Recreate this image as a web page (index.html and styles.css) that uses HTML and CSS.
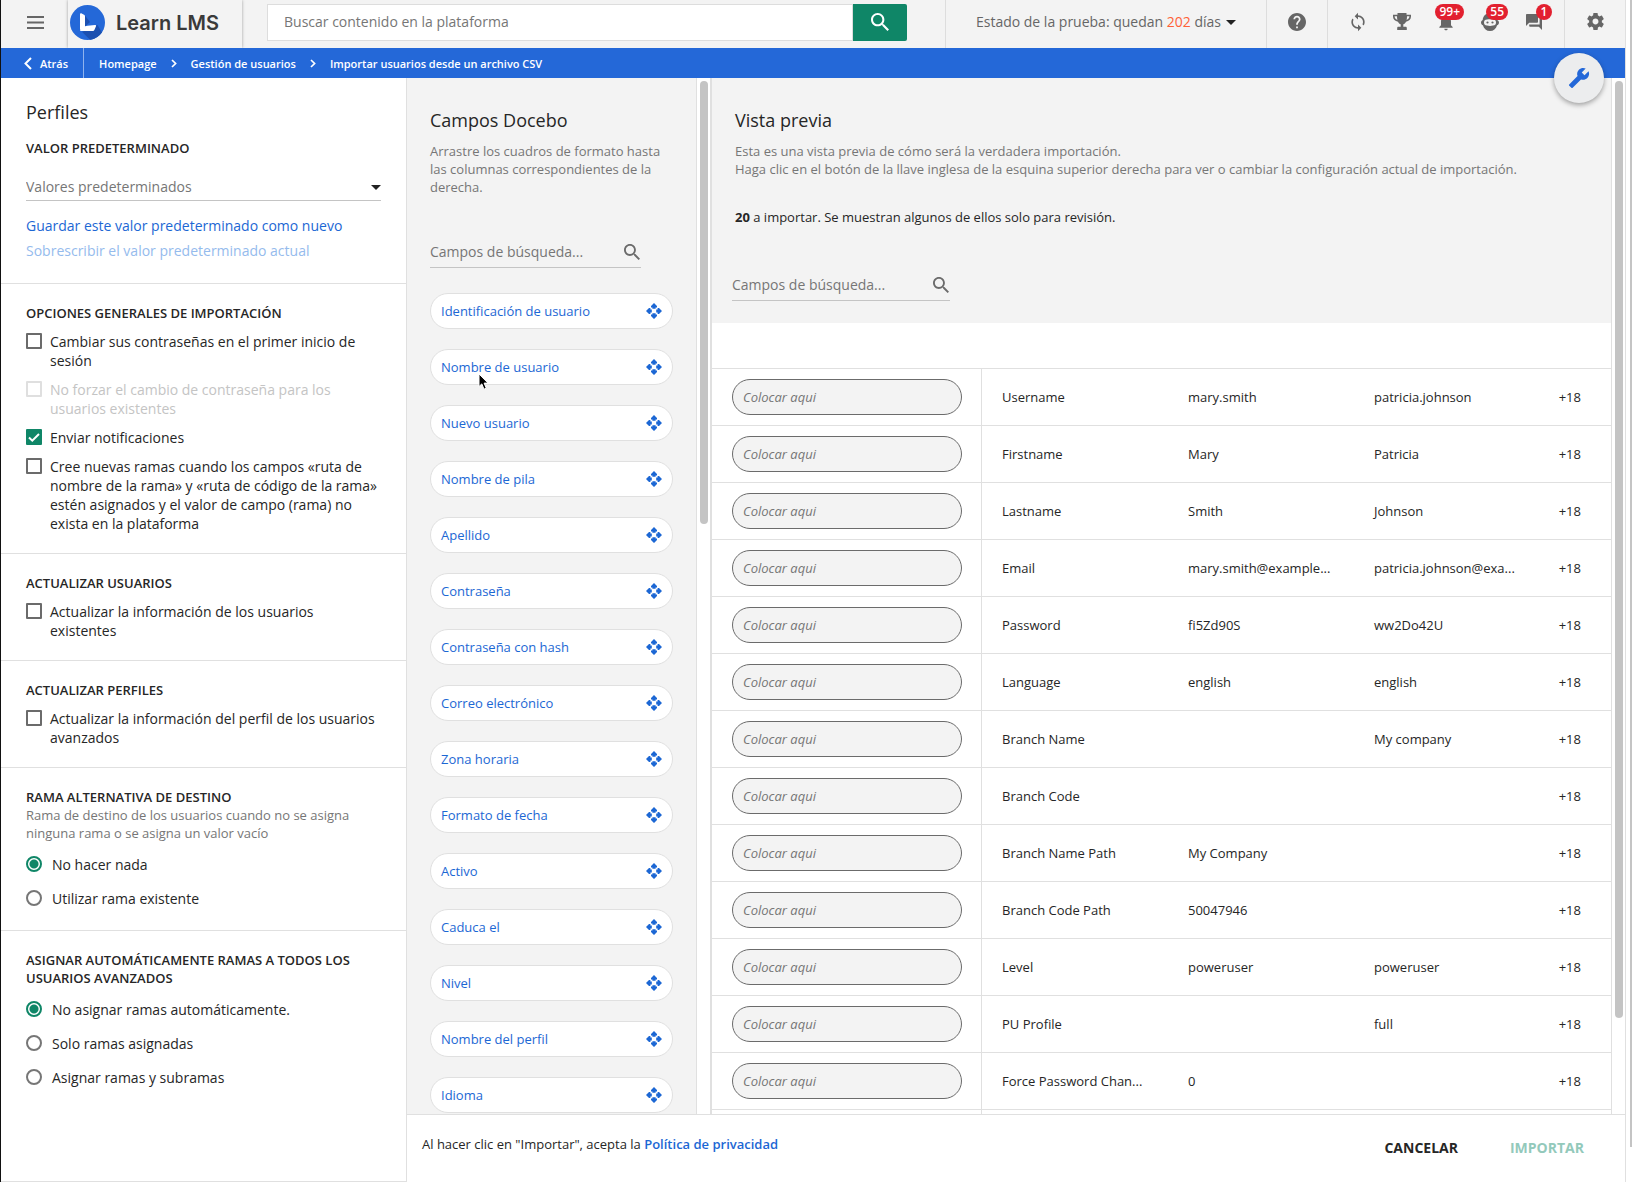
FILE: index.html
```html
<!DOCTYPE html>
<html lang="es">
<head>
  <meta charset="UTF-8">
  <meta name="viewport" content="width=device-width, initial-scale=1">
  <title>Importar usuarios desde un archivo CSV</title>
  <link rel="stylesheet" href="styles.css">
</head>
<body>

  <!-- Iconos compartidos -->
  <svg class="sprite" aria-hidden="true">
    <symbol id="i-search" viewBox="3 3 17.5 17.5"><path d="M15.5 14h-.79l-.28-.27C15.41 12.59 16 11.11 16 9.5 16 5.91 13.09 3 9.5 3S3 5.91 3 9.5 5.91 16 9.5 16c1.61 0 3.09-.59 4.23-1.57l.27.28v.79l5 4.99L20.49 19l-4.99-5zm-6 0C7.01 14 5 11.99 5 9.5S7.01 5 9.5 5 14 7.01 14 9.5 11.99 14 9.5 14z"/></symbol>
    <symbol id="i-move" viewBox="0 0 16 16"><path d="M8 0l3 3v1.400H9.600v1.400H6.400V4.400H5V3zM8 16l3-3v-1.400H9.600v-1.400H6.400v1.400H5V13zM0 8l3-3h1.400v1.400h1.400v3.200H4.400V11H3zM16 8l-3-3h-1.400v1.400h-1.400v3.200h1.400V11H13z"/></symbol>
    <symbol id="i-chevron" viewBox="0 0 6 9"><path d="M1 1l3.6 3.5L1 8" fill="none" stroke="currentColor" stroke-width="1.7"/></symbol>
  </svg>

  <div class="app">
    <header class="topbar">
      <button class="menu-btn" aria-label="Menú"><svg width="17" height="13" viewBox="0 0 17 13"><path d="M0 0h17v2H0zM0 5.5h17v2H0zM0 11h17v2H0z"/></svg></button>
      <a class="brand" href="#">
        <svg width="35" height="35" viewBox="0 0 35 35">
          <circle cx="17.500" cy="17.500" r="17.500" fill="#2468d8"/>
          <path d="M16 25.500L27.500 20l4.500 7.500A17.500 17.500 0 0 1 20 34.800l-8-8z" fill="#1c50b0"/>
          <path d="M14.500 10l5.500 7-5.500 5z" fill="#1c50b0"/>
          <path d="M10 9.500c0-1 .8-1.400 1.700-1l2.300 1.200c.8.400 1 1 1 1.800V23l-5 2z" fill="#fff"/>
          <path d="M10 25.800c1.500-3 4-4.600 7.500-5l7.500-.8c1 0 1.300.700.900 1.500l-1.400 3.300c-.4.900-1 1.200-2 1.200H11c-.7 0-1 0-1-.2z" fill="#fff"/>
        </svg>
        <span>Learn LMS</span>
      </a>
      <form class="search">
        <input type="search" placeholder="Buscar contenido en la plataforma" aria-label="Buscar contenido en la plataforma">
        <button type="button" aria-label="Buscar"><svg width="18" height="18"><use href="#i-search"/></svg></button>
      </form>
      <button class="trial">Estado de la prueba: quedan <em>202</em> días<i class="caret"></i></button>
      <div class="tools">
        <button aria-label="Ayuda"><svg width="18" height="18" viewBox="2 2 20 20"><path d="M12 2C6.480 2 2 6.480 2 12s4.480 10 10 10 10-4.480 10-10S17.520 2 12 2zm1 17h-2v-2h2v2zm2.070-7.750l-.9.920C13.450 12.900 13 13.500 13 15h-2v-.5c0-1.100.45-2.100 1.170-2.830l1.240-1.260c.37-.36.59-.86.59-1.410 0-1.100-.9-2-2-2s-2 .9-2 2H8c0-2.210 1.790-4 4-4s4 1.790 4 4c0 .88-.36 1.680-.93 2.250z"/></svg></button>
      </div>
      <div class="tools">
        <button aria-label="Sincronizar"><svg width="20" height="20" viewBox="0 0 24 24"><path d="M12 4V1L8 5l4 4V6c3.310 0 6 2.690 6 6 0 1.010-.25 1.970-.7 2.800l1.460 1.460C19.540 15.030 20 13.570 20 12c0-4.420-3.580-8-8-8zm0 14c-3.310 0-6-2.690-6-6 0-1.010.25-1.970.7-2.800L5.240 7.740C4.460 8.970 4 10.430 4 12c0 4.420 3.580 8 8 8v3l4-4-4-4v3z"/></svg></button>
        <button aria-label="Logros"><svg width="18" height="17" viewBox="0 0 18 17"><path d="M4.500 0h9v1.800H18v1.700c0 2.700-2.200 4.700-5 5.200-.7 1.400-1.600 2.200-2.700 2.500v2.600h2.200c.8 0 1.300.5 1.300 1.300V17H4.200v-1.900c0-.8.5-1.300 1.300-1.300h2.200v-2.600C6.600 10.900 5.700 10.100 5 8.700 2.200 8.200 0 6.200 0 3.500V1.800h4.500zM1.600 3.300c0 1.700 1.100 3 2.800 3.600-.3-1.100-.4-2.300-.4-3.600zm14.800 0H14c0 1.300-.1 2.500-.4 3.600 1.700-.6 2.800-1.900 2.800-3.600z"/></svg></button>
        <button aria-label="Notificaciones"><svg width="20" height="20" viewBox="0 0 24 24"><path d="M12 22c1.100 0 2-.9 2-2h-4c0 1.100.89 2 2 2zm6-6v-5c0-3.070-1.640-5.640-4.500-6.320V4c0-.83-.67-1.500-1.500-1.500s-1.500.67-1.500 1.500v.68C7.630 5.360 6 7.920 6 11v5l-2 2v1h16v-1l-2-2z"/></svg><span class="badge">99+</span></button>
        <button aria-label="Coach"><svg width="18" height="18" viewBox="0 0 18 18"><path d="M9 0c4 0 7 3 7.300 6.900.900.400 1.700 1.200 1.700 2.600 0 1.600-.8 2.400-1.900 2.700C15 15.800 12.500 18 9 18s-6-2.200-7.100-5.800C.8 11.900 0 11.100 0 9.500 0 8.100.8 7.300 1.700 6.900 2 3 5 0 9 0zM6 6.500a3 3 0 0 0 0 6c2 .5 4 .5 6 0a3 3 0 0 0 0-6c-2-.4-4-.4-6 0z" fill-rule="evenodd"/><circle cx="6.500" cy="9.500" r="1.100"/><circle cx="11.500" cy="9.500" r="1.100"/></svg><span class="badge">55</span></button>
        <button aria-label="Mensajes"><svg width="16" height="16" viewBox="2 2 20 20"><path d="M21 6h-2v9H6v2c0 .55.45 1 1 1h11l4 4V7c0-.55-.45-1-1-1zm-4 6V3c0-.55-.45-1-1-1H3c-.55 0-1 .45-1 1v14l4-4h10c.55 0 1-.45 1-1z"/></svg><span class="badge">1</span></button>
      </div>
      <div class="tools">
        <button aria-label="Configuración"><svg width="17" height="17" viewBox="2 2 20 20"><path d="M19.430 12.980c.04-.32.07-.64.07-.98s-.03-.66-.07-.98l2.110-1.650c.19-.15.24-.42.12-.64l-2-3.460c-.12-.22-.39-.3-.61-.22l-2.490 1c-.52-.4-1.080-.73-1.690-.98l-.38-2.650C14.460 2.180 14.250 2 14 2h-4c-.25 0-.46.18-.49.42l-.38 2.650c-.61.25-1.170.59-1.690.98l-2.490-1c-.23-.09-.49 0-.61.22l-2 3.460c-.13.22-.07.49.12.64l2.110 1.650c-.04.32-.07.65-.07.98s.03.66.07.98l-2.110 1.650c-.19.15-.24.42-.12.64l2 3.460c.12.22.39.3.61.22l2.490-1c.52.4 1.080.73 1.690.98l.38 2.650c.03.24.24.42.49.42h4c.25 0 .46-.18.49-.42l.38-2.650c.61-.25 1.170-.59 1.690-.98l2.490 1c.23.09.49 0 .61-.22l2-3.460c.12-.22.07-.49-.12-.64l-2.110-1.650zM12 15.500c-1.930 0-3.500-1.570-3.500-3.500s1.570-3.500 3.500-3.500 3.500 1.570 3.500 3.500-1.570 3.500-3.500 3.500z"/></svg></button>
      </div>
    </header>

    <nav class="crumbs" aria-label="Ruta">
      <a class="back" href="#"><svg width="8" height="13" viewBox="0 0 8 13"><path d="M7 1L1.500 6.500 7 12" fill="none" stroke="currentColor" stroke-width="2"/></svg>Atrás</a>
      <a href="#">Homepage</a>
      <svg width="6" height="9"><use href="#i-chevron"/></svg>
      <a href="#">Gestión de usuarios</a>
      <svg width="6" height="9"><use href="#i-chevron"/></svg>
      <span>Importar usuarios desde un archivo CSV</span>
      <button class="fab" aria-label="Configuración de importación"><svg width="22" height="22" viewBox="0 0 24 24"><path transform="matrix(-1 0 0 1 24 0)" d="M22.700 19l-9.100-9.100c.9-2.300.4-5-1.500-6.900-2-2-5-2.400-7.400-1.300L9 6 6 9 1.600 4.700C.4 7.100.9 10.100 2.900 12.100c1.900 1.900 4.600 2.400 6.900 1.500l9.100 9.100c.4.4 1 .4 1.400 0l2.300-2.300c.5-.4.5-1.100.1-1.400z"/></svg></button>
    </nav>

    <main class="main">
      <aside class="sidebar">
        <section>
          <h1>Perfiles</h1>
          <h2><label for="preset">Valor predeterminado</label></h2>
          <div class="select">
            <select id="preset"><option>Valores predeterminados</option></select>
            <i class="caret"></i>
          </div>
          <a class="link" href="#">Guardar este valor predeterminado como nuevo</a>
          <a class="link disabled" href="#" aria-disabled="true">Sobrescribir el valor predeterminado actual</a>
        </section>

        <section>
          <h2>Opciones generales de importación</h2>
          <label class="check"><input type="checkbox">Cambiar sus contraseñas en el primer inicio de sesión</label>
          <label class="check disabled"><input type="checkbox" disabled>No forzar el cambio de contraseña para los usuarios existentes</label>
          <label class="check"><input type="checkbox" checked>Enviar notificaciones</label>
          <label class="check"><input type="checkbox">Cree nuevas ramas cuando los campos «ruta de nombre de la rama» y «ruta de código de la rama» estén asignados y el valor de campo (rama) no exista en la plataforma</label>
        </section>

        <section>
          <h2>Actualizar usuarios</h2>
          <label class="check"><input type="checkbox">Actualizar la información de los usuarios existentes</label>
        </section>

        <section>
          <h2>Actualizar perfiles</h2>
          <label class="check"><input type="checkbox">Actualizar la información del perfil de los usuarios avanzados</label>
        </section>

        <section>
          <h2>Rama alternativa de destino</h2>
          <p class="hint">Rama de destino de los usuarios cuando no se asigna ninguna rama o se asigna un valor vacío</p>
          <div class="radios">
            <label><input type="radio" name="fallback" checked>No hacer nada</label>
            <label><input type="radio" name="fallback">Utilizar rama existente</label>
          </div>
        </section>

        <section>
          <h2>Asignar automáticamente ramas a todos los usuarios avanzados</h2>
          <div class="radios">
            <label><input type="radio" name="assign" checked>No asignar ramas automáticamente.</label>
            <label><input type="radio" name="assign">Solo ramas asignadas</label>
            <label><input type="radio" name="assign">Asignar ramas y subramas</label>
          </div>
        </section>
      </aside>

      <div class="content">
        <div class="columns">
          <section class="fields">
            <h1>Campos Docebo</h1>
            <p class="hint">Arrastre los cuadros de formato hasta las columnas correspondientes de la derecha.</p>
            <div class="filter">
              <input type="text" placeholder="Campos de búsqueda..." aria-label="Campos de búsqueda">
              <svg width="16" height="16"><use href="#i-search"/></svg>
            </div>
            <ul class="chips" id="chips"></ul>
          </section>
          <div class="scrollbar"><div class="thumb thumb-fields"></div></div>

          <section class="preview">
            <div class="preview-head">
              <h1>Vista previa</h1>
              <p class="hint">Esta es una vista previa de cómo será la verdadera importación.<br>Haga clic en el botón de la llave inglesa de la esquina superior derecha para ver o cambiar la configuración actual de importación.</p>
              <p class="count"><b>20</b> a importar. Se muestran algunos de ellos solo para revisión.</p>
              <div class="filter">
                <input type="text" placeholder="Campos de búsqueda..." aria-label="Campos de búsqueda">
                <svg width="16" height="16"><use href="#i-search"/></svg>
              </div>
            </div>
            <table>
              <colgroup><col class="col-drop"><col><col><col><col class="col-more"></colgroup>
              <tbody id="rows"></tbody>
            </table>
          </section>
          <div class="scrollbar scrollbar-end"><div class="thumb thumb-preview"></div></div>
        </div>

        <footer class="footer">
          <p>Al hacer clic en "Importar", acepta la <a href="#">Política de privacidad</a></p>
          <button>Cancelar</button>
          <button disabled>Importar</button>
        </footer>
      </div>
    </main>
  </div>
  <div class="page-scroll"></div>

  <script>
    const fields = [
      'Identificación de usuario', 'Nombre de usuario', 'Nuevo usuario', 'Nombre de pila',
      'Apellido', 'Contraseña', 'Contraseña con hash', 'Correo electrónico', 'Zona horaria',
      'Formato de fecha', 'Activo', 'Caduca el', 'Nivel', 'Nombre del perfil', 'Idioma'
    ];

    const rows = [
      ['Username', 'mary.smith', 'patricia.johnson'],
      ['Firstname', 'Mary', 'Patricia'],
      ['Lastname', 'Smith', 'Johnson'],
      ['Email', 'mary.smith@example...', 'patricia.johnson@exa...'],
      ['Password', 'fi5Zd90S', 'ww2Do42U'],
      ['Language', 'english', 'english'],
      ['Branch Name', '', 'My company'],
      ['Branch Code', '', ''],
      ['Branch Name Path', 'My Company', ''],
      ['Branch Code Path', '50047946', ''],
      ['Level', 'poweruser', 'poweruser'],
      ['PU Profile', '', 'full'],
      ['Force Password Chan...', '0', '']
    ];

    const pointer = '<svg class="pointer" width="12" height="18" viewBox="0 0 12 18"><path d="M1 1v12.500l2.800-2.600 2.200 5.300 2.300-1-2.200-5.100H10z"/></svg>';

    document.getElementById('chips').innerHTML = fields.map((name, i) => `
      <li draggable="true">${name}<svg width="16" height="16"><use href="#i-move"/></svg>${i === 1 ? pointer : ''}</li>`).join('');

    document.getElementById('rows').innerHTML = rows.map(([name, first, second]) => `
      <tr>
        <td><div class="drop">Colocar aqui</div></td>
        <th scope="row">${name}</th>
        <td>${first}</td>
        <td>${second}</td>
        <td>+18</td>
      </tr>`).join('') + '<tr><td></td><td></td><td></td><td></td><td></td></tr>';
  </script>

</body>
</html>
```
FILE: styles.css
```css
* {
  box-sizing: border-box;
}

body {
  margin: 0;
  height: 100vh;
  display: flex;
  overflow: hidden;
  font-family: "Open Sans", "Noto Sans", sans-serif;
  font-size: 14px;
  line-height: 19px;
  color: #262626;
  background: #fff;
}

h1, h2, p, ul {
  margin: 0;
  padding: 0;
}

h1 {
  font-size: 18px;
  line-height: 28px;
  font-weight: 400;
}

h2 {
  font-size: 13px;
  line-height: 18px;
  font-weight: 600;
  text-transform: uppercase;
}

a {
  color: #1c67d4;
  text-decoration: none;
}

button, input, select {
  font: inherit;
  color: inherit;
  border: 0;
  padding: 0;
  margin: 0;
  background: none;
}

button {
  cursor: pointer;
}

svg {
  flex: none;
  fill: currentColor;
}

.sprite {
  position: absolute;
  width: 0;
  height: 0;
}

.caret {
  border: 5px solid transparent;
  border-top-color: #222;
  border-bottom: 0;
}

.app {
  flex: 1;
  min-width: 0;
  display: flex;
  flex-direction: column;
  border-left: 1px solid #111;
  border-right: 1px solid #e0e0e0;
}

.page-scroll {
  width: 6px;
  height: 97%;
  border-right: 2px solid #c4c4c4;
}

/* Barra superior */
.topbar {
  height: 48px;
  display: flex;
  align-items: stretch;
  background: #f3f3f3;
  color: #666;
}

.menu-btn {
  width: 67px;
  padding: 0 0 4px 1px;
  display: flex;
  align-items: center;
  justify-content: center;
}

.brand {
  width: 174px;
  display: flex;
  align-items: center;
  gap: 11px;
  padding: 0 0 4px 2px;
  font-family: Inter, sans-serif;
  font-size: 20px;
  font-weight: 600;
  color: #3a3a3a;
  white-space: nowrap;
  box-shadow: 0 0 3px rgba(0, 0, 0, 0.35);
}

.brand span {
  padding-top: 2px;
}

.search {
  flex: 0 1 640px;
  display: flex;
  margin: 4px 0 7px 25px;
}

.search input {
  flex: 1;
  min-width: 0;
  padding: 0 16px 2px;
  background: #fff;
  border: 1px solid #ddd;
}

.search button {
  width: 54px;
  display: flex;
  align-items: center;
  justify-content: center;
  padding-bottom: 2px;
  background: #0f8667;
  color: #fff;
  border-radius: 0 2px 2px 0;
}

input::placeholder {
  color: #767676;
  opacity: 1;
}

.trial {
  margin-left: auto;
  padding: 0 30px 6px;
  border-left: 1px solid #ddd;
  white-space: nowrap;
}

.trial em {
  font-style: normal;
  color: #ff6137;
}

.trial .caret {
  display: inline-block;
  margin-left: 5px;
  vertical-align: middle;
}

.tools {
  display: flex;
  padding: 0 8px;
  border-left: 1px solid #ddd;
}

.tools button {
  position: relative;
  width: 44px;
  padding-bottom: 5px;
  display: flex;
  align-items: center;
  justify-content: center;
}

.badge {
  position: absolute;
  right: 4px;
  top: 4px;
  min-width: 16px;
  padding: 0 4px;
  border-radius: 8px;
  background: #e2202f;
  color: #fff;
  font-size: 12px;
  line-height: 16px;
  font-weight: 600;
  text-align: center;
}

/* Ruta de navegación */
.crumbs {
  position: relative;
  height: 30px;
  display: flex;
  align-items: center;
  gap: 14px;
  background: #2468d8;
  color: #fff;
  font-size: 11px;
  font-weight: 600;
}

.crumbs a, .crumbs span {
  color: #fff;
}

.crumbs .back {
  align-self: stretch;
  display: flex;
  align-items: center;
  gap: 8px;
  margin-right: 1px;
  padding: 0 15px 0 23px;
  border-right: 1px solid #8fb3ee;
}

.fab {
  position: absolute;
  right: 21px;
  top: 5px;
  z-index: 1;
  width: 50px;
  height: 50px;
  display: flex;
  align-items: center;
  justify-content: center;
  border-radius: 50%;
  background: #ecedee;
  color: #2468d8;
  box-shadow: 0 2px 5px rgba(0, 0, 0, 0.35);
}

.main {
  flex: 1;
  min-height: 0;
  display: flex;
}

/* Panel de opciones */
.sidebar {
  flex: 0 0 406px;
  overflow: auto;
  scrollbar-width: none;
  border-right: 1px solid #e0e0e0;
  border-bottom: 1px solid #e0e0e0;
}

.sidebar section {
  padding: 20px 25px;
  border-bottom: 1px solid #e0e0e0;
}

.sidebar section:last-child {
  border-bottom: 0;
}

.sidebar h1 {
  margin-bottom: 13px;
}

.select {
  position: relative;
  margin: 15px 0 12px;
  border-bottom: 1px solid #c4c4c4;
}

.select select {
  width: 100%;
  height: 28px;
  appearance: none;
  color: #767676;
}

.select .caret {
  position: absolute;
  right: 0;
  top: 13px;
  pointer-events: none;
}

.link {
  display: block;
  line-height: 25px;
}

.link.disabled {
  color: #95bbed;
}

.check {
  display: flex;
  gap: 8px;
  margin-top: 10px;
}

.check.disabled {
  color: #c4c4c4;
}

.check input {
  flex: none;
  width: 16px;
  height: 16px;
  margin-top: 1px;
  appearance: none;
  border: 2px solid #6b6b6b;
  border-radius: 1px;
}

.check input:disabled {
  border-color: #dfdfdf;
}

.check input:checked {
  border: 0;
  background: #0f8667 url("data:image/svg+xml,%3Csvg xmlns='http://www.w3.org/2000/svg' viewBox='0 0 16 16'%3E%3Cpath d='M3 8.500l3.300 3.200L13 5' fill='none' stroke='white' stroke-width='2'/%3E%3C/svg%3E");
}

.hint {
  font-size: 13px;
  line-height: 18px;
  color: #767676;
}

.radios {
  margin: 5px 0 -5px;
}

.radios label {
  display: flex;
  align-items: center;
  gap: 10px;
  height: 34px;
}

.radios input {
  width: 16px;
  height: 16px;
  appearance: none;
  border: 2px solid #767676;
  border-radius: 50%;
}

.radios input:checked {
  border-color: #0f8667;
  background: radial-gradient(circle, #0f8667 4px, transparent 5px);
}

/* Campos y vista previa */
.content {
  flex: 1;
  min-width: 0;
  display: flex;
  flex-direction: column;
}

.columns {
  flex: 1;
  min-height: 0;
  display: flex;
}

.fields {
  flex: 0 0 289px;
  overflow: hidden;
  padding: 28px 23px 0;
  background: #f3f3f3;
}

.fields .hint, .preview .hint {
  margin-top: 8px;
}

.filter {
  display: flex;
  align-items: center;
  width: 211px;
  height: 30px;
  padding: 0 1px 2px 0;
  border-bottom: 1px solid #c4c4c4;
  color: #6b6b6b;
}

.filter input {
  flex: 1;
  min-width: 0;
}

.fields .filter {
  margin: 42px 0 25px;
}

.chips {
  list-style: none;
  display: grid;
  gap: 20px;
}

.chips li {
  position: relative;
  display: flex;
  align-items: center;
  justify-content: space-between;
  height: 36px;
  padding: 0 10px;
  border: 1px solid #e0e0e0;
  border-radius: 18px;
  background: #fff;
  color: #1c67d4;
  font-size: 13px;
}

.pointer {
  position: absolute;
  left: 47px;
  top: 23px;
  fill: #000;
  stroke: #fff;
}

.scrollbar {
  flex: none;
  width: 16px;
  padding: 3px;
  border-left: 1px solid #e0e0e0;
  border-right: 2px solid #e0e0e0;
}

.scrollbar-end {
  width: 14px;
  border-right: 0;
}

.thumb {
  width: 8px;
  border-radius: 4px;
  background: #c4c4c4;
}

.thumb-fields {
  height: 43%;
}

.thumb-preview {
  height: 91%;
}

.preview {
  flex: 1;
  min-width: 0;
  overflow: hidden;
}

.preview-head {
  padding: 28px 23px 22px;
  background: #f3f3f3;
}

.count {
  margin: 30px 0 45px;
  font-size: 13px;
  line-height: 18px;
}

.preview .filter {
  width: 218px;
  margin-left: -3px;
}

table {
  width: 100%;
  margin-top: 45px;
  table-layout: fixed;
  border-collapse: separate;
  border-spacing: 0;
  font-size: 13px;
}

.col-drop {
  width: 270px;
}

.col-more {
  width: 71px;
}

td, th {
  height: 57px;
  padding: 0 20px;
  border-top: 1px solid #e0e0e0;
  font-weight: 400;
  text-align: left;
  white-space: nowrap;
}

td:first-child {
  padding: 0 19px 0 20px;
  border-right: 1px solid #e0e0e0;
}

td:last-child {
  padding: 0 30px 0 0;
  text-align: right;
}

.drop {
  height: 36px;
  padding: 0 10px;
  border: 1px solid #6b6b6b;
  border-radius: 18px;
  background: #f3f3f3;
  color: #767676;
  font-style: italic;
  line-height: 34px;
}

.footer {
  display: flex;
  align-items: center;
  gap: 52px;
  height: 68px;
  padding: 0 41px 0 15px;
  border-top: 1px solid #e0e0e0;
}

.footer p {
  flex: 1;
  padding-bottom: 8px;
  font-size: 13px;
}

.footer a {
  font-weight: 600;
}

.footer button {
  padding-bottom: 2px;
  font-weight: 700;
  text-transform: uppercase;
}

.footer button:disabled {
  color: #93c9bb;
  cursor: default;
}
```
